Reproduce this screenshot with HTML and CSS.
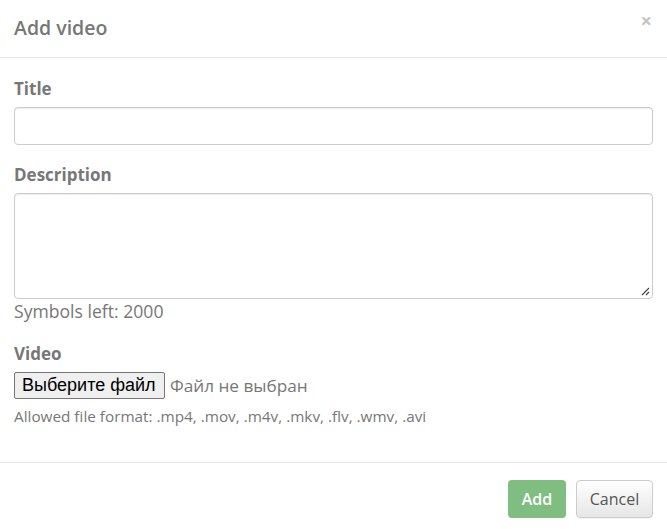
FILE: index.html
```html
<!DOCTYPE html>
<html>
<head>
<meta charset="utf-8">
<link rel="stylesheet" href="styles.css">
</head>
<body>
<div class="modal">
  <div class="modal-header">
    <h4 class="modal-title">Add video</h4>
    <span class="close">&times;</span>
  </div>
  <div class="modal-body">
    <div class="group">
      <label class="label">Title</label>
      <div class="input"></div>
    </div>
    <div class="group">
      <label class="label">Description</label>
      <div class="textarea">
        <svg class="grip" width="10" height="10" viewBox="0 0 10 10"><path d="M9 2 L2 9 M9 6 L6 9" stroke="#444" stroke-width="1.1"/></svg>
      </div>
      <div class="hint">Symbols left: 2000</div>
    </div>
    <div class="group video">
      <label class="label">Video</label>
      <div class="file-row">
        <span class="file-btn">Выберите файл</span>
        <span class="file-name">Файл не выбран</span>
      </div>
      <div class="help">Allowed file format: .mp4, .mov, .m4v, .mkv, .flv, .wmv, .avi</div>
    </div>
  </div>
  <div class="modal-footer">
    <span class="btn btn-add">Add</span>
    <span class="btn btn-cancel">Cancel</span>
  </div>
</div>
</body>
</html>
```
FILE: styles.css
```css
* { box-sizing: border-box; }
html, body { margin: 0; padding: 0; background: #fff; }
body { font-family: "Open Sans", "Noto Sans", sans-serif; color: #777; }
.modal { width: 667px; }
.modal-header {
  position: relative;
  padding: 14px 14px 14px;
  border-bottom: 1px solid #e5e5e5;
  height: 58px;
}
.modal-title { margin: 0; font-size: 19.5px; line-height: 27px; font-weight: 600; color: #777; }
.close { position: absolute; right: 15px; top: 11px; font-size: 20px; font-weight: 700; color: #c4c4c4; line-height: 20px; }
.modal-body { padding: 20px 14px 0; }
.label { display: block; font-size: 17px; font-weight: 700; line-height: 22px; color: #777; margin-bottom: 7px; }
.input { height: 38px; border: 1px solid #ccc; border-radius: 4px; box-shadow: inset 0 1px 1px rgba(0,0,0,.075); margin-bottom: 19px; }
.textarea { position: relative; height: 106px; border: 1px solid #ccc; border-radius: 4px; box-shadow: inset 0 1px 1px rgba(0,0,0,.075); }
.grip { position: absolute; right: 2px; bottom: 2px; }
.hint { font-size: 17.6px; line-height: 24px; color: #777; margin-bottom: 20px; }
.file-row { display: flex; align-items: center; height: 27px; }
.file-btn {
  font-family: "Liberation Sans", Arial, sans-serif; font-size: 18px; color: #000;
  background: #efefef; border: 1px solid #767676; border-radius: 2px;
  height: 27px; line-height: 25px; padding: 0 7px; width: 151px; white-space: nowrap;
}
.file-name { font-size: 17.2px; margin-left: 5px; color: #777; }
.help { font-size: 15.3px; line-height: 20px; margin-top: 7px; color: #777; }
.modal-footer {
  margin-top: 36px;
  border-top: 1px solid #e5e5e5;
  padding: 17px 14px 15px;
  display: flex; justify-content: flex-end; gap: 10px;
}
.btn { display: inline-block; height: 38px; line-height: 36px; border-radius: 4px; font-size: 16px; border: 1px solid transparent; text-align: center; padding: 0; }
.btn-add { background: #80bd80; color: #fff; font-weight: 600; width: 58px; }
.btn-cancel { background: linear-gradient(#fff, #e6e6e6); border-color: #ccc; color: #555; width: 77px; box-shadow: 0 1px 1px rgba(0,0,0,.05); }
```
